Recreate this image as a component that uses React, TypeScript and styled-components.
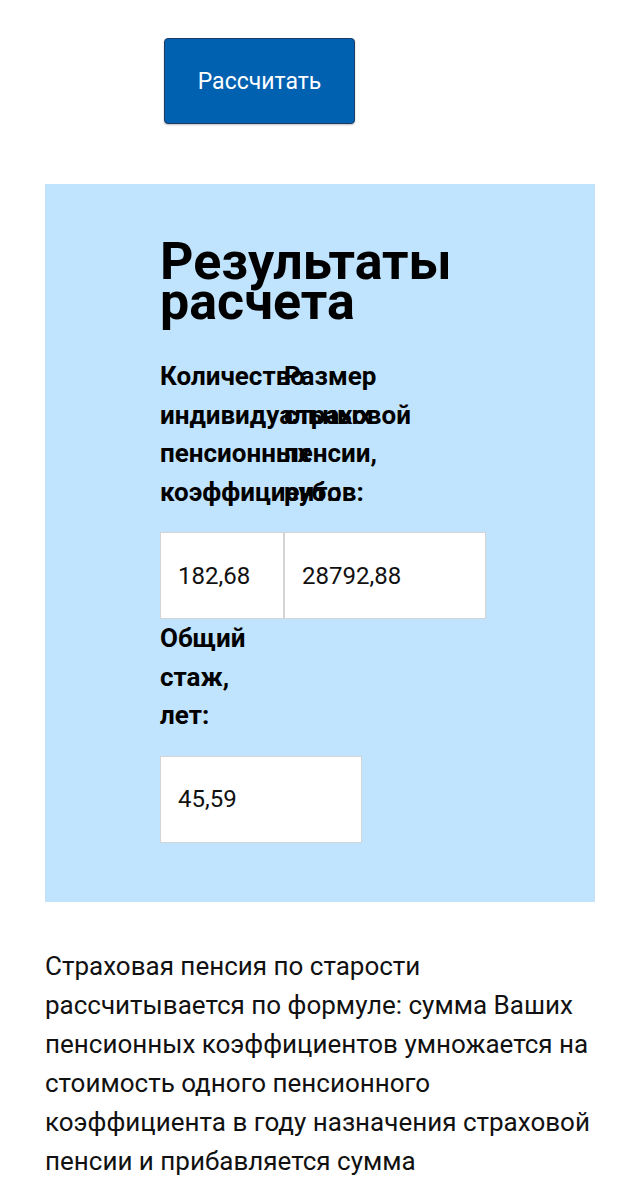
import React from "react";
import styled, { createGlobalStyle } from "styled-components";

// GLOBAL //
const GlobalStyle = createGlobalStyle`
  html, body {
    margin: 0;
    padding: 0;
    background: #fff;
  }
  body {
    font-family: Roboto, "Noto Sans", "Liberation Sans", sans-serif;
    color: #111;
  }
`;

type TField = {
  label: string;
  value: string;
  width: number;
};

const fields: TField[] = [
  { label: "Количество индивидуальных пенсионных коэффициентов:", value: "182,68", width: 124 },
  { label: "Размер страховой пенсии, руб.:", value: "28792,88", width: 202 },
  { label: "Общий стаж, лет:", value: "45,59", width: 202 },
];

const App = () => {
  return (
    <Page>
      <GlobalStyle />
      <ButtonRow>
        <CalcButton type="button">Рассчитать</CalcButton>
      </ButtonRow>
      <ResultPanel>
        <PanelTitle>Результаты расчета</PanelTitle>
        <Fields>
          {fields.map((f) => (
            <Field key={f.label} $width={f.width}>
              <Label>{f.label}</Label>
              <ValueBox readOnly value={f.value} />
            </Field>
          ))}
        </Fields>
      </ResultPanel>
      <Description>
        Страховая пенсия по старости рассчитывается по формуле: сумма Ваших
        пенсионных коэффициентов умножается на стоимость одного пенсионного
        коэффициента в году назначения страховой пенсии и прибавляется сумма
      </Description>
    </Page>
  );
};

// STYLED COMPONENTS //
const Page = styled.div({
  padding: "38px 45px 0",
  boxSizing: "border-box",
  width: 640,
  height: 1184,
  overflow: "hidden",
});
const ButtonRow = styled.div({
  display: "flex",
  paddingLeft: 119,
  marginBottom: 60,
});
const CalcButton = styled.button({
  width: 191,
  height: 86,
  background: "#0061b1",
  border: "1px solid #1b3c66",
  borderRadius: 4,
  color: "#fff",
  fontFamily: "Roboto, sans-serif",
  fontSize: 23,
  boxShadow: "0 1px 2px rgba(0,0,0,0.25)",
  padding: 0,
});
const ResultPanel = styled.section({
  background: "#c0e4fd",
  padding: "58px 100px 59px 115px",
});
const PanelTitle = styled.h2({
  margin: 0,
  fontSize: 52,
  lineHeight: "40px",
  fontWeight: 700,
  color: "#000",
  width: 320,
});
const Fields = styled.div({
  display: "flex",
  flexWrap: "wrap",
  width: 330,
  marginTop: 35,
});
const Field = styled.div<{ $width: number }>((props) => ({
  width: props.$width,
  display: "flex",
  flexDirection: "column",
}));
const Label = styled.div({
  width: 100,
  fontSize: 26,
  lineHeight: "38.5px",
  fontWeight: 700,
  color: "#000",
  whiteSpace: "normal",
  overflowWrap: "normal",
});
const ValueBox = styled.input({
  marginTop: 21,
  width: "100%",
  height: 87,
  boxSizing: "border-box",
  border: "1px solid #d4d4d4",
  background: "#fff",
  padding: "0 0 0 17px",
  fontFamily: "Roboto, sans-serif",
  fontSize: 24,
  color: "#111",
  outline: "none",
});
const Description = styled.p({
  margin: "45px 0 0",
  fontSize: 26,
  lineHeight: "39px",
  color: "#111",
});

export default App;
